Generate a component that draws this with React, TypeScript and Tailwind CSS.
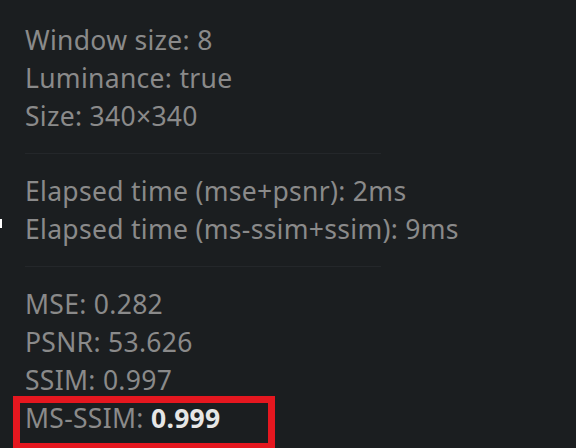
export default function App() {
  const groups: string[][] = [
    ['Window size: 8', 'Luminance: true', 'Size: 340×340'],
    ['Elapsed time (mse+psnr): 2ms', 'Elapsed time (ms-ssim+ssim): 9ms'],
    ['MSE: 0.282', 'PSNR: 53.626', 'SSIM: 0.997'],
  ]

  return (
    <div
      className="relative h-[448px] w-[576px] overflow-hidden bg-[#1b1e20] pt-[21px] pl-[25px] text-[26.5px] leading-[38px] tracking-[0.3px] text-[#8a8a8a]"
      style={{ fontFamily: '"Noto Sans", Lato, sans-serif' }}
    >
      {/* stray caret on the left edge */}
      <div className="absolute left-0 top-[219px] h-[9px] w-[2px] bg-white" />

      {groups.map((rows, gi) => (
        <div key={gi}>
          {rows.map((row) => (
            <div key={row}>{row}</div>
          ))}
          {gi < 2 && <div className="my-[18px] h-px w-[356px] bg-[#24272a]" />}
        </div>
      ))}

      <div className="relative">
        MS-SSIM: <span className="font-bold text-[#e6e6e6]">0.999</span>
        {/* highlight annotation */}
        <div className="pointer-events-none absolute -left-[12px] -top-[3px] h-[54px] w-[262px] border-[7px] border-[#e5171f]" />
      </div>
    </div>
  )
}
